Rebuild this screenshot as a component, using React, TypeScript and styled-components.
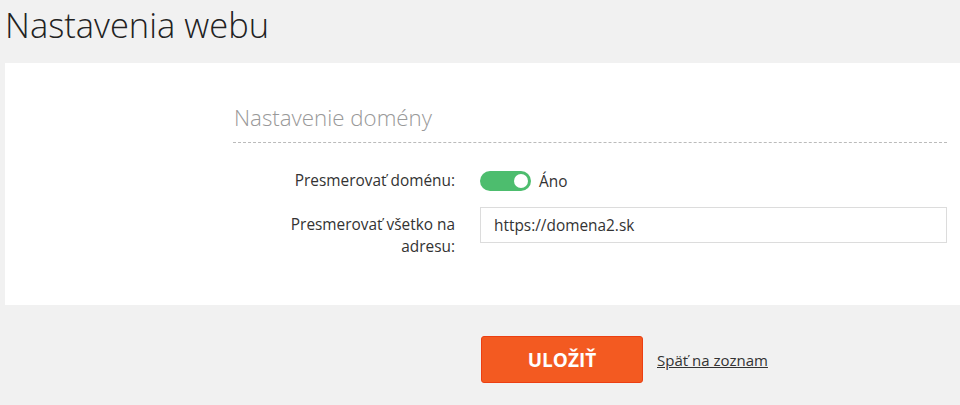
import React, { useState } from 'react';
import styled, { createGlobalStyle } from 'styled-components';

const GlobalStyle = createGlobalStyle`
  html, body {
    margin: 0;
    padding: 0;
    background: #f1f1f1;
    font-family: "Open Sans", "Liberation Sans", Arial, sans-serif;
    color: #333;
    overflow: hidden;
  }
  * { box-sizing: border-box; }
`;

const Page = styled.div`
  width: 960px;
  height: 405px;
  background: #f1f1f1;
`;

const Title = styled.h1`
  margin: 0;
  padding: 1px 0 0 5px;
  height: 63px;
  font-size: 34.5px;
  font-weight: 300;
  line-height: 48px;
  color: #222;
`;

const Panel = styled.section`
  margin-left: 5px;
  background: #fff;
  height: 242px;
  padding: 38px 13px 0 228px;
`;

const SectionTitle = styled.h2`
  margin: 0;
  padding: 0 0 7px 1px;
  font-size: 22.3px;
  font-weight: 300;
  line-height: 34px;
  color: #999;
  border-bottom: 1px dashed #bbb;
`;

const Form = styled.div`
  display: grid;
  grid-template-columns: 222px 1fr;
  column-gap: 25px;
  row-gap: 15px;
  padding-top: 27px;
`;

const Label = styled.label<{ $offset?: number }>`
  text-align: right;
  padding-left: 52px;
  font-size: 15.4px;
  line-height: 22px;
  color: #333;
  padding-top: ${(p) => p.$offset ?? 0}px;
`;

const Control = styled.div`
  display: flex;
  align-items: center;
  align-self: start;
  gap: 8px;
  min-height: 22px;
`;

const Track = styled.button<{ $on: boolean }>`
  position: relative;
  width: 51px;
  height: 20px;
  border: none;
  border-radius: 10px;
  padding: 0;
  cursor: pointer;
  background: ${(p) => (p.$on ? '#4dbd6e' : '#ccc')};
`;

const Knob = styled.span<{ $on: boolean }>`
  position: absolute;
  top: 3px;
  left: ${(p) => (p.$on ? '34px' : '3px')};
  width: 14px;
  height: 14px;
  border-radius: 50%;
  background: #fff;
`;

const ToggleText = styled.span`
  font-size: 15.4px;
  color: #333;
`;

const Input = styled.input`
  width: 100%;
  height: 36px;
  border: 1px solid #dcdcdc;
  border-radius: 0;
  padding: 0 13px;
  font-family: inherit;
  font-size: 15.4px;
  color: #333;
  outline: none;
`;

const Actions = styled.div`
  display: flex;
  align-items: center;
  gap: 14px;
  padding: 31px 0 0 481px;
`;

const SaveButton = styled.button`
  width: 162px;
  height: 47px;
  background: #f35a21;
  border: 1px solid #ec3f12;
  border-radius: 3px;
  color: #fff;
  font-family: inherit;
  font-size: 19px;
  font-weight: 700;
  cursor: pointer;
`;

const BackLink = styled.a`
  font-size: 15px;
  color: #333;
  text-decoration: underline;
  cursor: pointer;
`;

export default function App() {
  const [redirect, setRedirect] = useState(true);
  const [url, setUrl] = useState('https://domena2.sk');

  return (
    <Page>
      <GlobalStyle />
      <Title>Nastavenia webu</Title>
      <Panel>
        <SectionTitle>Nastavenie domény</SectionTitle>
        <Form>
          <Label>Presmerovať doménu:</Label>
          <Control>
            <Track $on={redirect} onClick={() => setRedirect(!redirect)}>
              <Knob $on={redirect} />
            </Track>
            <ToggleText>{redirect ? 'Áno' : 'Nie'}</ToggleText>
          </Control>
          <Label $offset={7}>Presmerovať všetko na adresu:</Label>
          <Control>
            <Input value={url} onChange={(e) => setUrl(e.target.value)} />
          </Control>
        </Form>
      </Panel>
      <Actions>
        <SaveButton>ULOŽIŤ</SaveButton>
        <BackLink>Späť na zoznam</BackLink>
      </Actions>
    </Page>
  );
}
